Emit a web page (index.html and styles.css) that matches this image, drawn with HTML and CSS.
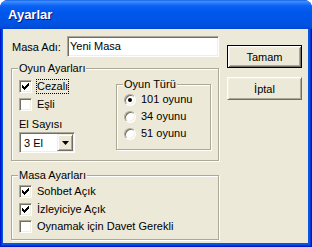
FILE: index.html
```html
<!DOCTYPE html>
<html lang="tr">
<head>
  <meta charset="UTF-8">
  <title>Ayarlar</title>
  <link rel="stylesheet" href="styles.css">
</head>
<body>
  <div class="window">
    <div class="titlebar"><span class="title">Ayarlar</span></div>
    <div class="frame">
      <div class="client">
        <div class="main">
          <div class="name-row">
            <span class="name-label">Masa Adı:</span>
            <div class="textbox">Yeni Masa</div>
          </div>

          <fieldset class="group game-group">
            <legend>Oyun Ayarları</legend>
            <div class="game-body">
              <div class="game-left">
                <div class="check">
                  <span class="box"><svg width="13" height="13" viewBox="0 0 13 13"><path d="M3 5H4V6H5V7H6V6H7V5H8V4H9V3H10V6H9V7H8V8H7V9H6V10H5V9H4V8H3Z" fill="#000"/></svg></span>
                  <span class="text focus">Cezalı</span>
                </div>
                <div class="check">
                  <span class="box"></span>
                  <span class="text">Eşli</span>
                </div>
                <div class="field-label">El Sayısı</div>
                <div class="combo">
                  <span class="combo-text">3 El</span>
                  <span class="combo-btn"><svg width="7" height="4" viewBox="0 0 7 4"><path d="M0 0H7L3.5 4Z" fill="#000"/></svg></span>
                </div>
              </div>

              <fieldset class="group type-group">
                <legend>Oyun Türü</legend>
                <div class="radio"><span class="dot on"></span><span class="text">101 oyunu</span></div>
                <div class="radio"><span class="dot"></span><span class="text">34 oyunu</span></div>
                <div class="radio"><span class="dot"></span><span class="text">51 oyunu</span></div>
              </fieldset>
            </div>
          </fieldset>

          <fieldset class="group table-group">
            <legend>Masa Ayarları</legend>
            <div class="check">
              <span class="box"><svg width="13" height="13" viewBox="0 0 13 13"><path d="M3 5H4V6H5V7H6V6H7V5H8V4H9V3H10V6H9V7H8V8H7V9H6V10H5V9H4V8H3Z" fill="#000"/></svg></span>
              <span class="text">Sohbet Açık</span>
            </div>
            <div class="check">
              <span class="box"><svg width="13" height="13" viewBox="0 0 13 13"><path d="M3 5H4V6H5V7H6V6H7V5H8V4H9V3H10V6H9V7H8V8H7V9H6V10H5V9H4V8H3Z" fill="#000"/></svg></span>
              <span class="text">İzleyiciye Açık</span>
            </div>
            <div class="check">
              <span class="box"></span>
              <span class="text">Oynamak için Davet Gerekli</span>
            </div>
          </fieldset>
        </div>

        <div class="buttons">
          <button class="btn default">Tamam</button>
          <button class="btn">İptal</button>
        </div>
      </div>
    </div>
  </div>
</body>
</html>
```

FILE: styles.css
```css
body {
  margin: 0;
  font-family: "Liberation Sans", Arial, sans-serif;
  font-size: 11px;
  color: #000;
  background: #fff;
}
.window {
  width: 312px;
  height: 247px;
  display: flex;
  flex-direction: column;
  border-radius: 8px 8px 0 0;
  overflow: hidden;
  background: #0831D9;
}
.titlebar {
  height: 29px;
  flex: none;
  display: flex;
  align-items: center;
  padding: 0 0 1px 8px;
  box-sizing: border-box;
  background: linear-gradient(to bottom, #0A4AD6 0, #3D95FF 1px, #2A7EFC 3px, #0A60F3 6px, #0057EC 12px, #0055E6 20px, #0050DD 26px, #0045D0 29px);
}
.title {
  color: #fff;
  font-weight: bold;
  font-size: 13px;
  text-shadow: 1px 1px #0A1883;
}
.frame {
  flex: 1;
  display: flex;
  padding: 0 4px 4px 3px;
  background: #0855DD;
  box-shadow: inset 1px 0 #0019CF, inset -1px 0 #0019CF, inset 0 -1px #0019CF, inset 2px 0 #0831D9, inset -2px 0 #0831D9, inset 0 -2px #0831D9;
}
.client {
  flex: 1;
  display: flex;
  gap: 8px;
  padding: 7px 6px 0 8px;
  background: #ECE9D8;
}
.main {
  width: 208px;
}
.name-row {
  display: flex;
  align-items: center;
  height: 21px;
}
.name-label {
  padding-left: 1px;
}
.textbox {
  margin-left: auto;
  width: 152px;
  height: 21px;
  box-sizing: border-box;
  padding-left: 2px;
  line-height: 19px;
  background: #fff;
  border: 1px solid;
  border-color: #ACA899 #fff #fff #ACA899;
  box-shadow: inset 1px 1px #716F64, inset -1px -1px #F1EFE2;
}
.group {
  margin: 0;
  border: 1px solid #ACA899;
  box-shadow: inset 1px 1px #fff, 1px 1px #fff;
}
.group legend {
  padding: 0 1px;
  margin-left: -1px;
  line-height: 13px;
  background: #ECE9D8;
}
.game-group {
  margin-top: 5px;
  padding: 0 7px 7px 7px;
}
.game-body {
  display: flex;
}
.game-left {
  width: 97px;
  padding-top: 3px;
}
.check {
  display: flex;
  align-items: flex-start;
  height: 18px;
}
.box {
  width: 13px;
  height: 13px;
  flex: none;
  box-sizing: border-box;
  margin: 2px 4px 0 0;
  background: #fff;
  border: 1px solid;
  border-color: #ACA899 #fff #fff #ACA899;
  box-shadow: inset 1px 1px #716F64, inset -1px -1px #F1EFE2;
}
.box svg {
  display: block;
  margin: -1px;
}
.check .text {
  padding: 0 1px;
  margin-top: 1px;
  line-height: 15px;
}
.focus {
  outline: 1px dotted #000;
  outline-offset: -1px;
}
.field-label {
  margin-top: 4px;
  line-height: 13px;
}
.combo {
  margin-top: 1px;
  width: 56px;
  height: 21px;
  box-sizing: border-box;
  display: flex;
  align-items: center;
  padding: 1px;
  background: #fff;
  border: 1px solid;
  border-color: #ACA899 #fff #fff #ACA899;
  box-shadow: inset 1px 1px #716F64, inset -1px -1px #F1EFE2;
}
.combo-text {
  flex: 1;
  padding-left: 3px;
}
.combo-btn {
  width: 16px;
  height: 17px;
  box-sizing: border-box;
  display: flex;
  align-items: center;
  justify-content: center;
  background: #ECE9D8;
  border: 1px solid;
  border-color: #F1EFE2 #716F64 #716F64 #F1EFE2;
  box-shadow: inset 1px 1px #fff, inset -1px -1px #ACA899;
}
.type-group {
  width: 95px;
  box-sizing: border-box;
  margin-top: 3px;
  padding: 0 4px 7px 7px;
  align-self: flex-start;
}
.radio {
  display: flex;
  align-items: flex-start;
  height: 17px;
}
.dot {
  width: 12px;
  height: 12px;
  flex: none;
  box-sizing: border-box;
  margin: 3px 5px 0 0;
  border-radius: 50%;
  background: #fff;
  border: 1px solid;
  border-color: #ACA899 #fff #fff #ACA899;
  box-shadow: inset 1px 1px #716F64, inset -1px -1px #F1EFE2;
  display: flex;
  align-items: center;
  justify-content: center;
}
.dot.on::after {
  content: "";
  width: 4px;
  height: 4px;
  border-radius: 50%;
  background: #000;
}
.radio .text {
  line-height: 17px;
}
.table-group {
  margin-top: 8px;
  padding: 1px 7px 3px 7px;
}
.table-group .check {
  height: 17.5px;
}
.buttons {
  display: flex;
  flex-direction: column;
  gap: 9px;
  margin-top: 9px;
}
.btn {
  width: 75px;
  height: 23px;
  padding: 0;
  font: inherit;
  color: #000;
  background: #ECE9D8;
  border: 1px solid;
  border-color: #fff #716F64 #716F64 #fff;
  box-shadow: inset 1px 1px #F1EFE2, inset -1px -1px #ACA899;
}
.btn.default {
  border-color: #000;
  box-shadow: inset 1px 1px #fff, inset -1px -1px #716F64, inset 2px 2px #F1EFE2, inset -2px -2px #ACA899;
}
```
